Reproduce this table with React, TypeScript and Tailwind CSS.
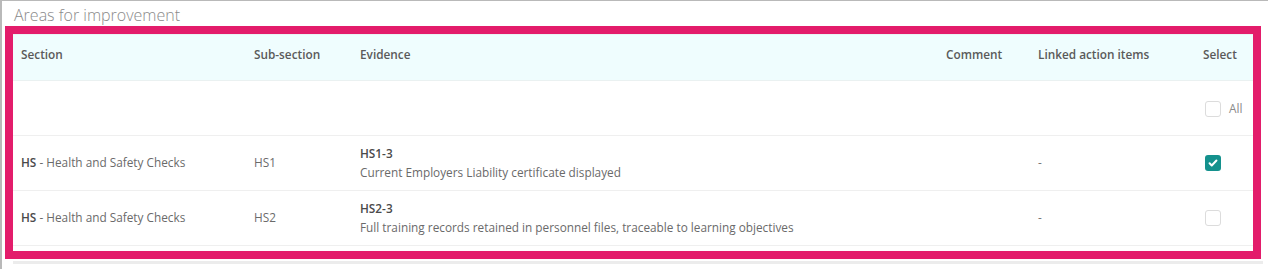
const ROWS = [
    {
        code: "HS",
        section: "Health and Safety Checks",
        sub: "HS1",
        ref: "HS1-3",
        evidence: "Current Employers Liability certificate displayed",
        checked: true,
    },
    {
        code: "HS",
        section: "Health and Safety Checks",
        sub: "HS2",
        ref: "HS2-3",
        evidence: "Full training records retained in personnel files, traceable to learning objectives",
        checked: false,
    },
];

const COLS = "grid grid-cols-[233px_106px_586px_92px_165px_58px]";

function Checkbox({ checked }: { checked: boolean }) {
    if (checked) {
        return (
            <span className="flex h-[16px] w-[16px] items-center justify-center rounded-[3px] bg-[#14918d]">
                <svg viewBox="0 0 16 16" className="h-[10px] w-[10px]">
                    <path
                        d="M2.5 8.5 L6 12 L13.5 4"
                        fill="none"
                        stroke="white"
                        strokeWidth="3.2"
                        strokeLinecap="round"
                        strokeLinejoin="round"
                    />
                </svg>
            </span>
        );
    }
    return (
        <span className="block h-[16px] w-[16px] rounded-[3px] border border-[#dcdcdc] bg-white" />
    );
}

export default function App() {
    return (
        <div className="w-[1268px] h-[269px] border-t border-l-2 border-[#b9b9b9] bg-white font-['Open_Sans',sans-serif]">

            <h2 className="pl-[12px] pt-[4px] h-[25px] text-[16px] leading-[20px] font-light text-[#8a8a8a]">
                Areas for improvement
            </h2>

            <div className="ml-[3px] w-[1256px] border-[8px] border-[#e31c6b] bg-white">

                <div className={`${COLS} h-[47px] pb-[5px] items-center bg-[#effdfe] border-t border-t-[#e8f3f3] border-b border-b-[#eaf1f1] text-[11.8px] font-semibold text-[#5a5a5a]`}>
                    <div className="pl-[8px]">Section</div>
                    <div className="pl-[8px]">Sub-section</div>
                    <div className="pl-[8px]">Evidence</div>
                    <div className="pl-[8px]">Comment</div>
                    <div className="pl-[8px]">Linked action items</div>
                    <div className="pl-[8px]">Select</div>
                </div>

                <div className={`${COLS} h-[55px] items-center border-b border-[#efefef]`}>
                    <div className="col-start-6 flex items-center gap-[8px] pl-[10px] pt-[2px] text-[11.8px] text-[#8a8a8a]">
                        <Checkbox checked={false} />
                        All
                    </div>
                </div>

                {ROWS.map((row) => (
                    <div
                        key={row.ref}
                        className={`${COLS} h-[55px] items-center border-b border-[#efefef] text-[11.8px] text-[#6a6a6a]`}
                    >
                        <div className="pl-[8px]">
                            <span className="font-semibold text-[#4a4a4a]">{row.code}</span> - {row.section}
                        </div>
                        <div className="pl-[8px]">{row.sub}</div>
                        <div className="pl-[8px] leading-[19px]">
                            <div className="font-semibold text-[#4a4a4a]">{row.ref}</div>
                            <div>{row.evidence}</div>
                        </div>
                        <div />
                        <div className="pl-[8px] text-[#777]">-</div>
                        <div className="pl-[10px]">
                            <Checkbox checked={row.checked} />
                        </div>
                    </div>
                ))}

                <div className="h-[5px]" />
            </div>

            <div className="ml-[11px] w-[1250px] h-[3px] mt-[2px] bg-[#ececec]" />

        </div>
    );
}
